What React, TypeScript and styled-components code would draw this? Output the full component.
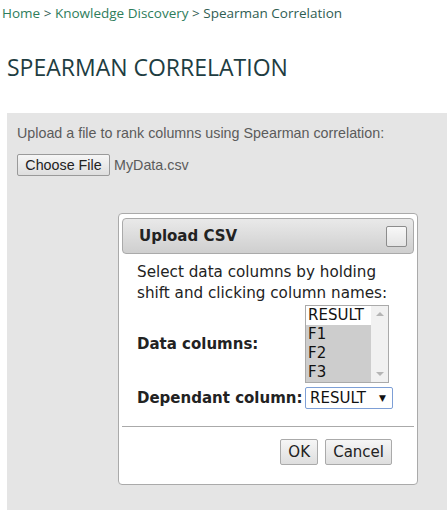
import styled, { createGlobalStyle } from 'styled-components';

const GlobalStyle = createGlobalStyle`
  html, body {
    margin: 0;
    padding: 0;
    background: #fff;
  }
  * {
    box-sizing: border-box;
  }
`;

const Page = styled.div`
  width: 447px;
  height: 510px;
  overflow: hidden;
  font-family: 'Open Sans', sans-serif;
`;

const Breadcrumb = styled.div`
  padding: 3px 0 0 2px;
  font-size: 13.5px;
  line-height: 20px;
  color: #2f5d52;
`;

const Crumb = styled.a`
  color: #2e7d5b;
  text-decoration: none;
`;

const Title = styled.h1`
  margin: 28px 0 0 7px;
  font-size: 23px;
  font-weight: 400;
  line-height: 32px;
  color: #1e3d42;
`;

const Panel = styled.div`
  margin: 30px 0 0 7px;
  height: 400px;
  background: #e5e5e5;
  padding: 12px 10px;
  display: flex;
  flex-direction: column;
  font-family: 'Liberation Sans', Arial, sans-serif;
`;

const Intro = styled.p`
  margin: 0;
  font-size: 14.3px;
  line-height: 17px;
  color: #5b5b5b;
`;

const FileRow = styled.div`
  margin-top: 12px;
  display: flex;
  align-items: center;
  gap: 4px;
  font-size: 14.3px;
  color: #5b5b5b;
`;

const FileButton = styled.button`
  height: 22px;
  width: 93px;
  padding: 0;
  font-family: 'Liberation Sans', Arial, sans-serif;
  font-size: 14.3px;
  color: #222;
  border: 1px solid #9a9a9a;
  border-radius: 2px;
  background: linear-gradient(#f6f6f6, #dedede);
`;

const Dialog = styled.div`
  margin: 37px 0 0 101px;
  width: 300px;
  border: 1px solid #aaa;
  border-radius: 4px;
  background: #fff;
  padding: 4px 3px 0;
  font-family: 'DejaVu Sans', Verdana, sans-serif;
  color: #222;
`;

const TitleBar = styled.div`
  height: 36px;
  border: 1px solid #aaa;
  border-radius: 4px;
  background: linear-gradient(#e9e9e9, #cfcfcf);
  display: flex;
  align-items: center;
  justify-content: space-between;
  padding: 0 6px 0 16px;
  font-weight: 700;
  font-size: 15px;
  color: #222;
`;

const CloseBox = styled.span`
  width: 21px;
  height: 21px;
  border: 1px solid #8c8c8c;
  border-radius: 2px;
  background: linear-gradient(#f8f8f8, #e4e4e4);
`;

const Body = styled.div`
  padding: 8px 12px 17px 15px;
  font-size: 15.2px;
`;

const Help = styled.p`
  margin: 0;
  line-height: 21px;
`;

const FieldRow = styled.div<{ $gap: number }>`
  display: flex;
  align-items: center;
  margin-top: ${({ $gap }) => $gap}px;
`;

const Label = styled.label`
  width: 168px;
  font-weight: 700;
  font-size: 15px;
  white-space: nowrap;
`;

const ListBox = styled.div`
  width: 84px;
  height: 78px;
  border: 1px solid #aaa;
  display: flex;
  background: #fff;
`;

const Options = styled.div`
  flex: 1;
  display: flex;
  flex-direction: column;
`;

const Option = styled.div<{ $selected?: boolean }>`
  height: 19px;
  line-height: 19px;
  padding-left: 2px;
  font-size: 15px;
  color: #111;
  background: ${({ $selected }) => ($selected ? '#cdcdcd' : '#fff')};
`;

const ScrollBar = styled.div`
  width: 17px;
  background: #f1f1f1;
  display: flex;
  flex-direction: column;
  justify-content: space-between;
  align-items: center;
  padding: 6px 0;
`;

const Arrow = styled.span<{ $down?: boolean }>`
  width: 0;
  height: 0;
  border-left: 4px solid transparent;
  border-right: 4px solid transparent;
  ${({ $down }) =>
    $down ? 'border-top: 4px solid #b5b5b5;' : 'border-bottom: 4px solid #b5b5b5;'}
`;

const DropDown = styled.div`
  width: 88px;
  height: 22px;
  border: 1px solid #7d9fd6;
  border-radius: 2px;
  display: flex;
  align-items: center;
  justify-content: space-between;
  padding: 0 6px 0 4px;
  font-size: 15px;
  color: #111;
  background: #fff;
`;

const Caret = styled.span`
  font-size: 9px;
  color: #111;
`;

const ButtonPane = styled.div`
  border-top: 1px solid #aaa;
  display: flex;
  justify-content: flex-end;
  gap: 7px;
  padding: 12px 22px 19px 0;
`;

const DialogButton = styled.button<{ $width?: number }>`
  height: 26px;
  width: ${({ $width }) => ($width ? `${$width}px` : 'auto')};
  padding: 0 7px;
  font-family: 'DejaVu Sans', Verdana, sans-serif;
  font-size: 15px;
  color: #222;
  border: 1px solid #aaa;
  border-radius: 2px;
  background: linear-gradient(#f6f6f6, #dedede);
`;

export default function App() {
  return (
    <Page>
      <GlobalStyle />
      <Breadcrumb>
        <Crumb href="#">Home</Crumb> &gt; <Crumb href="#">Knowledge Discovery</Crumb> &gt;{' '}
        Spearman Correlation
      </Breadcrumb>
      <Title>SPEARMAN CORRELATION</Title>
      <Panel>
        <Intro>Upload a file to rank columns using Spearman correlation:</Intro>
        <FileRow>
          <FileButton>Choose File</FileButton>
          <span>MyData.csv</span>
        </FileRow>
        <Dialog>
          <TitleBar>
            <span>Upload CSV</span>
            <CloseBox />
          </TitleBar>
          <Body>
            <Help>
              Select data columns by holding
              <br />
              shift and clicking column names:
            </Help>
            <FieldRow $gap={1}>
              <Label>Data columns:</Label>
              <ListBox>
                <Options>
                  <Option>RESULT</Option>
                  <Option $selected>F1</Option>
                  <Option $selected>F2</Option>
                  <Option $selected>F3</Option>
                </Options>
                <ScrollBar>
                  <Arrow />
                  <Arrow $down />
                </ScrollBar>
              </ListBox>
            </FieldRow>
            <FieldRow $gap={4}>
              <Label>Dependant column:</Label>
              <DropDown>
                <span>RESULT</span>
                <Caret>▼</Caret>
              </DropDown>
            </FieldRow>
          </Body>
          <ButtonPane>
            <DialogButton $width={38}>OK</DialogButton>
            <DialogButton>Cancel</DialogButton>
          </ButtonPane>
        </Dialog>
      </Panel>
    </Page>
  );
}
